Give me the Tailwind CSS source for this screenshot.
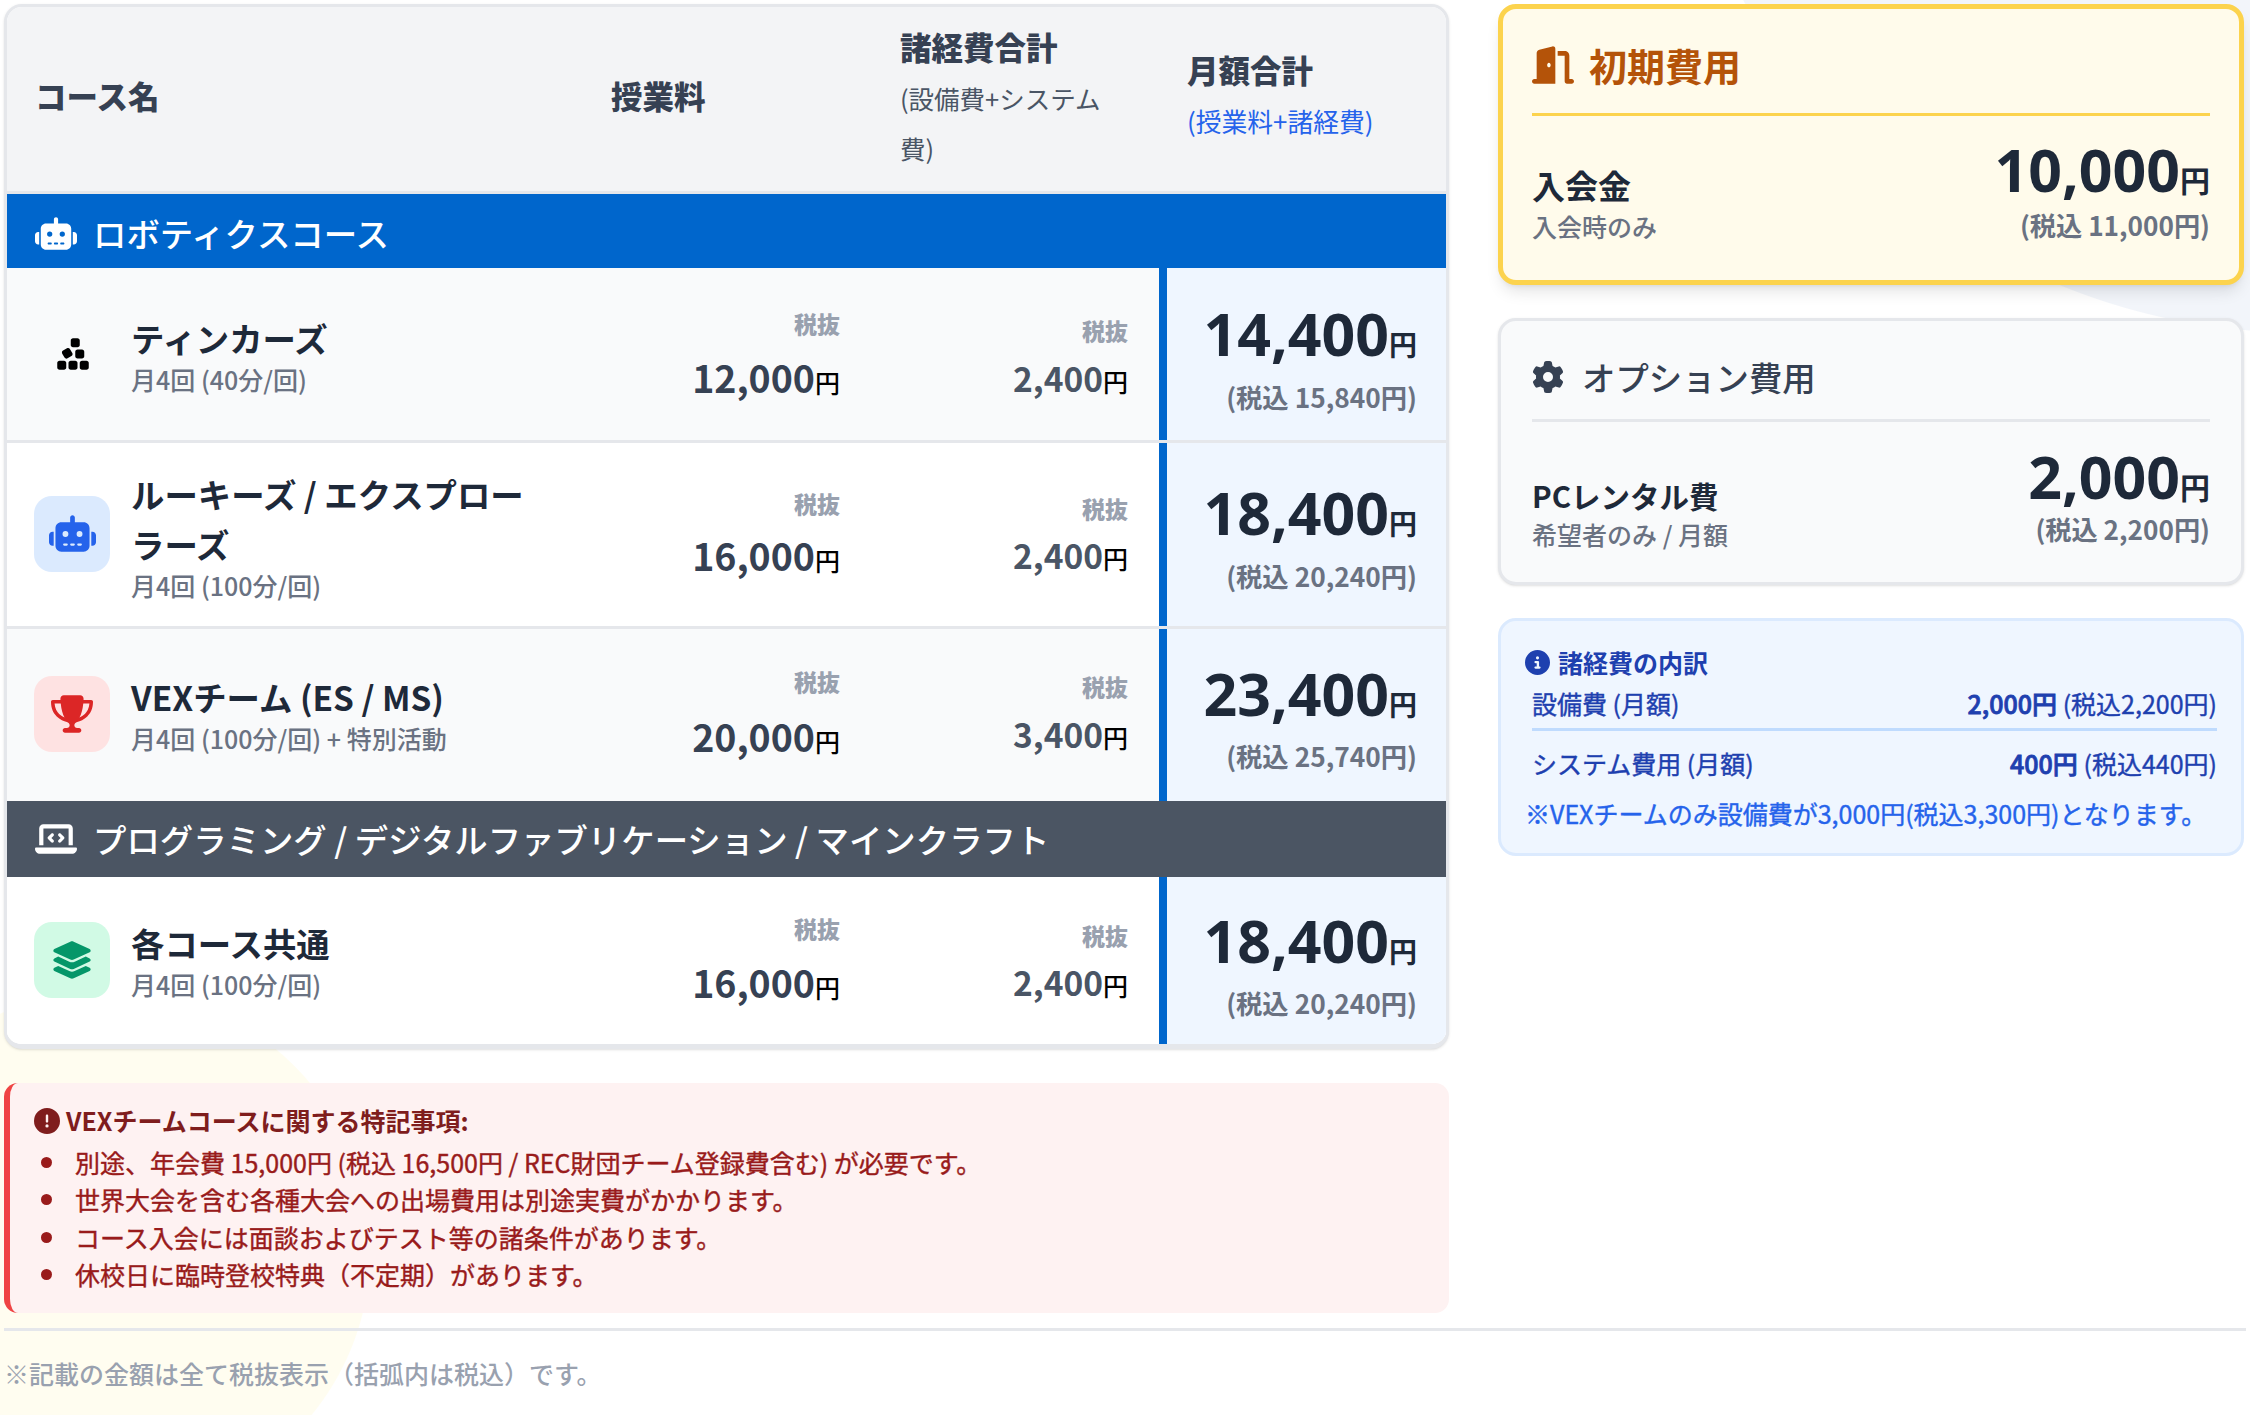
<!DOCTYPE html>
<html lang="ja">
<head>
<meta charset="utf-8">
<title>料金表</title>
<script src="https://cdn.jsdelivr.net/npm/@tailwindcss/browser@4"></script>
</head>
<body class="h-screen overflow-hidden bg-white bg-[radial-gradient(circle_at_110px_1250px,#fffdf0_260px,transparent_261px),radial-gradient(circle_at_2300px_-300px,#f2f5fa_632px,transparent_633px)] font-['Noto_Sans_CJK_JP','Noto_Sans',sans-serif] text-gray-800">

<div class="flex flex-col px-[4px] pt-[4px]">
  <div class="flex gap-[49px]">
    <!-- left column -->
    <div class="w-[1445px] shrink-0">
      <div class="overflow-hidden rounded-[18px] border-x-[3px] border-t-[3px] border-b-[5px] border-gray-200 bg-white shadow-sm">
        <div class="grid h-[187px] grid-cols-[574px_289px_289px_1fr] items-center border-b-[3px] border-gray-200 bg-gray-100 text-[31.5px] font-black text-gray-700">
          <div class="pb-[6px] pl-[28px]">コース名</div>
          <div class="pb-[6px] pl-[30px]">授業料</div>
          <div class="pb-[2px] pl-[30px] pr-[30px]">諸経費合計<div class="mt-[2px] text-[25.5px] font-normal leading-[50px] text-gray-600">(設備費+システム費)</div></div>
          <div class="pb-[7px] pl-[28px]">月額合計<div class="mt-[2px] text-[25.8px] font-normal leading-[49px] text-[#2563eb]">(授業料+諸経費)</div></div>
        </div>

        <div class="flex h-[74px] items-center gap-[16px] bg-[#0066cc] pl-[28px] pt-[5px] text-[33.4px] font-medium text-white">
          <svg class="h-[34px] w-[42px] fill-current" viewBox="0 0 640 512"><path d="M320 0c17.7 0 32 14.3 32 32V96H472c44.2 0 80 35.8 80 80V416c0 44.2-35.8 80-80 80H168c-44.2 0-80-35.8-80-80V176c0-44.2 35.8-80 80-80H288V32c0-17.7 14.3-32 32-32zM208 384c-8.8 0-16 7.2-16 16s7.2 16 16 16h32c8.8 0 16-7.2 16-16s-7.2-16-16-16H208zm96 0c-8.8 0-16 7.2-16 16s7.2 16 16 16h32c8.8 0 16-7.2 16-16s-7.2-16-16-16H304zm96 0c-8.8 0-16 7.2-16 16s7.2 16 16 16h32c8.8 0 16-7.2 16-16s-7.2-16-16-16H400zM264 256a40 40 0 1 0 -80 0 40 40 0 1 0 80 0zm152 40a40 40 0 1 0 0-80 40 40 0 1 0 0 80zM48 224H64V416H48c-26.5 0-48-21.5-48-48V272c0-26.5 21.5-48 48-48zm544 0c26.5 0 48 21.5 48 48v96c0 26.5-21.5 48-48 48H576V224h16z"/></svg>
          ロボティクスコース
        </div>

        <!-- ティンカーズ -->
        <div class="grid h-[175px] grid-cols-[574px_289px_289px_1fr] border-b-[3px] border-gray-200 bg-gray-50">
          <div class="flex items-center gap-[21px] pl-[27px]">
            <div class="flex h-[76px] w-[76px] items-center justify-center pl-[2px]">
              <svg class="h-[36px] w-[36px] fill-black" viewBox="0 0 448 512"><path d="M192 64v64c0 17.7 14.3 32 32 32h64c17.7 0 32-14.3 32-32V64c0-17.7-14.3-32-32-32H224c-17.7 0-32 14.3-32 32zM82.7 207c-15.3 8.8-20.5 28.4-11.7 43.7l32 55.4c8.8 15.3 28.4 20.5 43.7 11.7l55.4-32c15.3-8.8 20.5-28.4 11.7-43.7l-32-55.4c-8.8-15.3-28.4-20.5-43.7-11.7L82.7 207zM288 192c-17.7 0-32 14.3-32 32v64c0 17.7 14.3 32 32 32h64c17.7 0 32-14.3 32-32V224c0-17.7-14.3-32-32-32H288zm64 160c-17.7 0-32 14.3-32 32v64c0 17.7 14.3 32 32 32h64c17.7 0 32-14.3 32-32V384c0-17.7-14.3-32-32-32H352zM160 384v64c0 17.7 14.3 32 32 32h64c17.7 0 32-14.3 32-32V384c0-17.7-14.3-32-32-32H192c-17.7 0-32 14.3-32 32zM32 352c-17.7 0-32 14.3-32 32v64c0 17.7 14.3 32 32 32H96c17.7 0 32-14.3 32-32V384c0-17.7-14.3-32-32-32H32z"/></svg>
            </div>
            <div>
              <div class="text-[33.4px] font-bold leading-[50px]">ティンカーズ</div>
              <div class="text-[25px] font-medium leading-[32px] text-gray-500">月4回 (40分/回)</div>
            </div>
          </div>
          <div class="flex flex-col items-end justify-center pr-[30px] pt-[9px]">
            <div class="text-[23px] font-black leading-[36px] text-gray-400">税抜</div>
            <div class="mt-[6px] text-[37.5px] font-bold leading-[60px] text-gray-700">12,000<span class="text-[25px] font-medium text-black">円</span></div>
          </div>
          <div class="flex flex-col items-end justify-center pr-[31px] pt-[11px]">
            <div class="text-[23px] font-black leading-[36px] text-gray-400">税抜</div>
            <div class="mt-[4px] text-[33.5px] font-bold leading-[52px] text-gray-600">2,400<span class="text-[25px] font-medium text-black">円</span></div>
          </div>
          <div class="flex flex-col items-end justify-center border-l-[8px] border-[#0066cc] bg-blue-50 pr-[29px] pt-[9px]">
            <div class="font-['Noto_Sans',sans-serif] text-[59px] font-bold leading-[66px]">14,400<span class="font-['Noto_Sans_CJK_JP',sans-serif] text-[28px]">円</span></div>
            <div class="text-[26.3px] font-bold leading-[40px] text-gray-500">(税込 15,840円)</div>
          </div>
        </div>

        <!-- ルーキーズ -->
        <div class="grid h-[186px] grid-cols-[574px_289px_289px_1fr] border-b-[3px] border-gray-200 bg-white">
          <div class="flex items-center gap-[21px] pl-[27px]">
            <div class="mb-[2px] flex h-[76px] w-[76px] shrink-0 items-center justify-center rounded-[18px] bg-[#dbeafe]">
              <svg class="h-[38px] w-[47px] fill-[#2563eb]" viewBox="0 0 640 512"><path d="M320 0c17.7 0 32 14.3 32 32V96H472c44.2 0 80 35.8 80 80V416c0 44.2-35.8 80-80 80H168c-44.2 0-80-35.8-80-80V176c0-44.2 35.8-80 80-80H288V32c0-17.7 14.3-32 32-32zM208 384c-8.8 0-16 7.2-16 16s7.2 16 16 16h32c8.8 0 16-7.2 16-16s-7.2-16-16-16H208zm96 0c-8.8 0-16 7.2-16 16s7.2 16 16 16h32c8.8 0 16-7.2 16-16s-7.2-16-16-16H304zm96 0c-8.8 0-16 7.2-16 16s7.2 16 16 16h32c8.8 0 16-7.2 16-16s-7.2-16-16-16H400zM264 256a40 40 0 1 0 -80 0 40 40 0 1 0 80 0zm152 40a40 40 0 1 0 0-80 40 40 0 1 0 0 80zM48 224H64V416H48c-26.5 0-48-21.5-48-48V272c0-26.5 21.5-48 48-48zm544 0c26.5 0 48 21.5 48 48v96c0 26.5-21.5 48-48 48H576V224h16z"/></svg>
            </div>
            <div class="w-[420px]">
              <div class="text-[33.4px] font-bold leading-[50px]">ルーキーズ / エクスプローラーズ</div>
              <div class="text-[25px] font-medium leading-[32px] text-gray-500">月4回 (100分/回)</div>
            </div>
          </div>
          <div class="flex flex-col items-end justify-center pr-[30px] pt-[6px]">
            <div class="text-[23px] font-black leading-[36px] text-gray-400">税抜</div>
            <div class="mt-[4px] text-[37.5px] font-bold leading-[60px] text-gray-700">16,000<span class="text-[25px] font-medium text-black">円</span></div>
          </div>
          <div class="flex flex-col items-end justify-center pr-[31px] pt-[5px]">
            <div class="text-[23px] font-black leading-[36px] text-gray-400">税抜</div>
            <div class="mt-[3px] text-[33.5px] font-bold leading-[52px] text-gray-600">2,400<span class="text-[25px] font-medium text-black">円</span></div>
          </div>
          <div class="flex flex-col items-end justify-center border-l-[8px] border-[#0066cc] bg-blue-50 pr-[29px] pt-[5px]">
            <div class="font-['Noto_Sans',sans-serif] text-[59px] font-bold leading-[66px]">18,400<span class="font-['Noto_Sans_CJK_JP',sans-serif] text-[28px]">円</span></div>
            <div class="text-[26.3px] font-bold leading-[40px] text-gray-500">(税込 20,240円)</div>
          </div>
        </div>

        <!-- VEX -->
        <div class="grid h-[172px] grid-cols-[574px_289px_289px_1fr] bg-gray-50">
          <div class="flex items-center gap-[21px] pl-[27px]">
            <div class="mb-[2px] flex h-[76px] w-[76px] shrink-0 items-center justify-center rounded-[18px] bg-[#fee2e2]">
              <svg class="h-[38px] w-[42px] fill-[#dc2626]" viewBox="0 0 576 512"><path d="M400 0H176c-26.5 0-48.1 21.8-47.1 48.2c.2 5.3 .4 10.6 .7 15.8H24C10.7 64 0 74.7 0 88c0 92.6 33.5 157 78.5 200.7c44.3 43.1 98.3 64.8 138.1 75.8c23.4 6.5 39.4 26 39.4 45.6c0 20.9-17 37.9-37.9 37.9H192c-17.7 0-32 14.3-32 32s14.3 32 32 32H384c17.7 0 32-14.3 32-32s-14.3-32-32-32H357.9C337 448 320 431 320 410.1c0-19.6 15.9-39.2 39.4-45.6c39.9-11 93.9-32.7 138.2-75.8C542.5 245 576 180.6 576 88c0-13.3-10.7-24-24-24H446.4c.3-5.2 .5-10.4 .7-15.8C448.1 21.8 426.5 0 400 0zM48.9 112h84.4c9.1 90.1 29.2 150.3 51.9 190.6c-24.9-11-50.8-26.5-73.2-48.3c-32-31.1-58-76-63-142.3zM464.1 254.3c-22.4 21.8-48.3 37.3-73.2 48.3c22.7-40.3 42.8-100.5 51.9-190.6h84.4c-5.1 66.3-31.1 111.2-63 142.3z"/></svg>
            </div>
            <div class="pb-[4px]">
              <div class="text-[33.4px] font-bold leading-[50px]">VEXチーム (ES / MS)</div>
              <div class="text-[25px] font-medium leading-[32px] text-gray-500">月4回 (100分/回) + 特別活動</div>
            </div>
          </div>
          <div class="flex flex-col items-end justify-center pr-[30px] pt-[3px]">
            <div class="text-[23px] font-black leading-[36px] text-gray-400">税抜</div>
            <div class="mt-[7px] text-[37.5px] font-bold leading-[60px] text-gray-700">20,000<span class="text-[25px] font-medium text-black">円</span></div>
          </div>
          <div class="flex flex-col items-end justify-center pr-[31px]">
            <div class="text-[23px] font-black leading-[36px] text-gray-400">税抜</div>
            <div class="mt-[4px] text-[33.5px] font-bold leading-[52px] text-gray-600">3,400<span class="text-[25px] font-medium text-black">円</span></div>
          </div>
          <div class="flex flex-col items-end justify-center border-l-[8px] border-[#0066cc] bg-blue-50 pr-[29px] pt-[4px]">
            <div class="font-['Noto_Sans',sans-serif] text-[59px] font-bold leading-[66px]">23,400<span class="font-['Noto_Sans_CJK_JP',sans-serif] text-[28px]">円</span></div>
            <div class="text-[26.3px] font-bold leading-[38px] text-gray-500">(税込 25,740円)</div>
          </div>
        </div>

        <div class="flex h-[76px] items-center gap-[16px] bg-[#4b5563] pl-[28px] text-[33.4px] font-medium text-white">
          <svg class="h-[34px] w-[42px] fill-current" viewBox="0 0 640 512"><path d="M64 96c0-35.3 28.7-64 64-64H512c35.3 0 64 28.7 64 64V352H512V96H128V352H64V96zM0 403.2C0 392.6 8.6 384 19.2 384H620.8c10.6 0 19.2 8.6 19.2 19.2c0 42.4-34.4 76.8-76.8 76.8H76.8C34.4 480 0 445.6 0 403.2zM281 209l-31 31 31 31c9.4 9.4 9.4 24.6 0 33.9s-24.6 9.4-33.9 0l-48-48c-9.4-9.4-9.4-24.6 0-33.9l48-48c9.4-9.4 24.6-9.4 33.9 0s9.4 24.6 0 33.9zM393 175l48 48c9.4 9.4 9.4 24.6 0 33.9l-48 48c-9.4 9.4-24.6 9.4-33.9 0s-9.4-24.6 0-33.9l31-31-31-31c-9.4-9.4-9.4-24.6 0-33.9s24.6-9.4 33.9 0z"/></svg>
          プログラミング / デジタルファブリケーション / マインクラフト
        </div>

        <!-- 各コース共通 -->
        <div class="grid h-[167px] grid-cols-[574px_289px_289px_1fr] bg-white">
          <div class="flex items-center gap-[21px] pl-[27px]">
            <div class="mb-[2px] flex h-[76px] w-[76px] shrink-0 items-center justify-center rounded-[18px] bg-[#d1fae5]">
              <svg class="h-[38px] w-[42px] fill-[#059669]" viewBox="0 0 576 512"><path d="M264.5 5.2c14.9-6.9 32.1-6.9 47 0l218.6 101c8.5 3.9 13.9 12.4 13.9 21.8s-5.4 17.9-13.9 21.8l-218.6 101c-14.9 6.9-32.1 6.9-47 0L45.9 149.8C37.4 145.8 32 137.3 32 128s5.4-17.9 13.9-21.8L264.5 5.2zM476.9 209.6l53.2 24.6c8.5 3.9 13.9 12.4 13.9 21.8s-5.4 17.9-13.9 21.8l-218.6 101c-14.9 6.9-32.1 6.9-47 0L45.9 277.8C37.4 273.8 32 265.3 32 256s5.4-17.9 13.9-21.8l53.2-24.6 152 70.2c23.4 10.8 50.4 10.8 73.8 0l152-70.2zm-152 198.2l152-70.2 53.2 24.6c8.5 3.9 13.9 12.4 13.9 21.8s-5.4 17.9-13.9 21.8l-218.6 101c-14.9 6.9-32.1 6.9-47 0L45.9 405.8C37.4 401.8 32 393.3 32 384s5.4-17.9 13.9-21.8l53.2-24.6 152 70.2c23.4 10.8 50.4 10.8 73.8 0z"/></svg>
            </div>
            <div class="pb-[3px]">
              <div class="text-[33.4px] font-bold leading-[50px]">各コース共通</div>
              <div class="text-[25px] font-medium leading-[32px] text-gray-500">月4回 (100分/回)</div>
            </div>
          </div>
          <div class="flex flex-col items-end justify-center pr-[30px] pt-[6px]">
            <div class="text-[23px] font-black leading-[36px] text-gray-400">税抜</div>
            <div class="mt-[6px] text-[37.5px] font-bold leading-[60px] text-gray-700">16,000<span class="text-[25px] font-medium text-black">円</span></div>
          </div>
          <div class="flex flex-col items-end justify-center pr-[31px] pt-[6px]">
            <div class="text-[23px] font-black leading-[36px] text-gray-400">税抜</div>
            <div class="mt-[3px] text-[33.5px] font-bold leading-[52px] text-gray-600">2,400<span class="text-[25px] font-medium text-black">円</span></div>
          </div>
          <div class="flex flex-col items-end justify-center border-l-[8px] border-[#0066cc] bg-blue-50 pr-[29px] pt-[7px]">
            <div class="font-['Noto_Sans',sans-serif] text-[59px] font-bold leading-[66px]">18,400<span class="font-['Noto_Sans_CJK_JP',sans-serif] text-[28px]">円</span></div>
            <div class="text-[26.3px] font-bold leading-[38px] text-gray-500">(税込 20,240円)</div>
          </div>
        </div>
      </div>

      <!-- 特記事項 -->
      <div class="mt-[34px] h-[230px] rounded-[14px] border-l-[6px] border-[#ef4444] bg-[#fef2f2] pl-[24px] pt-[19px] text-[25px] text-[#991b1b]">
        <div class="flex items-center gap-[6px] font-bold text-[#7f1d1d]">
          <svg class="h-[26px] w-[26px] fill-current" viewBox="0 0 512 512"><path d="M256 512A256 256 0 1 0 256 0a256 256 0 1 0 0 512zm0-384c13.3 0 24 10.7 24 24V264c0 13.3-10.7 24-24 24s-24-10.7-24-24V152c0-13.3 10.7-24 24-24zM224 352a32 32 0 1 1 64 0 32 32 0 1 1 -64 0z"/></svg>
          VEXチームコースに関する特記事項:
        </div>
        <ul class="ml-[7px] mt-[4px] font-normal leading-[37.5px] [-webkit-text-stroke:0.4px_currentColor]">
          <li class="flex items-center gap-[23px]"><span class="h-[11px] w-[11px] rounded-full bg-[#991b1b]"></span>別途、年会費 15,000円 (税込 16,500円 / REC財団チーム登録費含む) が必要です。</li>
          <li class="flex items-center gap-[23px]"><span class="h-[11px] w-[11px] rounded-full bg-[#991b1b]"></span>世界大会を含む各種大会への出場費用は別途実費がかかります。</li>
          <li class="flex items-center gap-[23px]"><span class="h-[11px] w-[11px] rounded-full bg-[#991b1b]"></span>コース入会には面談およびテスト等の諸条件があります。</li>
          <li class="flex items-center gap-[23px]"><span class="h-[11px] w-[11px] rounded-full bg-[#991b1b]"></span>休校日に臨時登校特典（不定期）があります。</li>
        </ul>
      </div>
    </div>

    <!-- right column -->
    <div class="flex w-[746px] shrink-0 flex-col gap-[33px]">
      <div class="h-[281px] rounded-[18px] border-[5px] border-[#fcd34d] bg-[#fffbeb] px-[29px] pt-[32px] shadow-lg">
        <div class="flex items-center gap-[15px] border-b-[3px] border-[#fcd34d] pb-[24px] text-[38px] font-bold leading-[48px] text-[#b45309]">
          <svg class="h-[38px] w-[42px] fill-current" viewBox="0 0 576 512"><path d="M320 32c0-9.9-4.5-19.2-12.3-25.2S289.8-1.4 280.2 1l-179.9 45C79 51.3 64 70.5 64 92.5V448H32c-17.7 0-32 14.3-32 32s14.3 32 32 32H96 288h32V480 32zM256 256c0 17.7-10.7 32-24 32s-24-14.3-24-32s10.7-32 24-32s24 14.3 24 32zm96-128h96V480c0 17.7 14.3 32 32 32h64c17.7 0 32-14.3 32-32s-14.3-32-32-32H512V128c0-35.3-28.7-64-64-64H352v64z"/></svg>
          初期費用
        </div>
        <div class="mt-[21px] flex items-start justify-between">
          <div class="pt-[24px]">
            <div class="text-[33px] font-bold leading-[48px]">入会金</div>
            <div class="text-[25px] font-medium leading-[34px] text-gray-500">入会時のみ</div>
          </div>
          <div class="pt-[2px] text-right">
            <div class="font-['Noto_Sans',sans-serif] text-[59px] font-bold leading-[60px]">10,000<span class="font-['Noto_Sans_CJK_JP',sans-serif] text-[30px]">円</span></div>
            <div class="text-[26.2px] font-bold leading-[32px] text-gray-500">(税込 11,000円)</div>
          </div>
        </div>
      </div>

      <div class="h-[267px] rounded-[18px] border-[3px] border-gray-200 bg-gray-50 px-[31px] pt-[32px] shadow-sm">
        <div class="flex items-center gap-[18px] border-b-[3px] border-gray-200 pb-[18px] text-[33.4px] font-medium leading-[48px] text-gray-700">
          <svg class="h-[32px] w-[32px] fill-current" viewBox="0 0 512 512"><path d="M495.9 166.6c3.2 8.7 .5 18.4-6.4 24.6l-43.3 39.4c1.1 8.3 1.7 16.8 1.7 25.4s-.6 17.1-1.7 25.4l43.3 39.4c6.9 6.2 9.6 15.9 6.4 24.6c-4.4 11.9-9.7 23.3-15.8 34.3l-4.7 8.1c-6.6 11-14 21.4-22.1 31.2c-5.9 7.2-15.7 9.6-24.5 6.8l-55.7-17.7c-13.4 10.3-28.2 18.9-44 25.4l-12.5 57.1c-2 9.1-9 16.3-18.2 17.8c-13.8 2.3-28 3.5-42.5 3.5s-28.7-1.2-42.5-3.5c-9.2-1.5-16.2-8.7-18.2-17.8l-12.5-57.1c-15.8-6.5-30.6-15.1-44-25.4L83.1 425.9c-8.8 2.8-18.6 .3-24.5-6.8c-8.1-9.8-15.5-20.2-22.1-31.2l-4.7-8.1c-6.1-11-11.4-22.4-15.8-34.3c-3.2-8.7-.5-18.4 6.4-24.6l43.3-39.4C64.6 273.1 64 264.6 64 256s.6-17.1 1.7-25.4L22.4 191.2c-6.9-6.2-9.6-15.9-6.4-24.6c4.4-11.9 9.7-23.3 15.8-34.3l4.7-8.1c6.6-11 14-21.4 22.1-31.2c5.9-7.2 15.7-9.6 24.5-6.8l55.7 17.7c13.4-10.3 28.2-18.9 44-25.4l12.5-57.1c2-9.1 9-16.3 18.2-17.8C227.3 1.2 241.5 0 256 0s28.7 1.2 42.5 3.5c9.2 1.5 16.2 8.7 18.2 17.8l12.5 57.1c15.8 6.5 30.6 15.1 44 25.4l55.7-17.7c8.8-2.8 18.6-.3 24.5 6.8c8.1 9.8 15.5 20.2 22.1 31.2l4.7 8.1c6.1 11 11.4 22.4 15.8 34.3zM256 336a80 80 0 1 0 0-160 80 80 0 1 0 0 160z"/></svg>
          オプション費用
        </div>
        <div class="mt-[20px] flex items-start justify-between">
          <div class="pt-[30px]">
            <div class="text-[29.5px] font-bold leading-[46px]">PCレンタル費</div>
            <div class="text-[25px] font-medium leading-[32px] text-gray-500">希望者のみ / 月額</div>
          </div>
          <div class="pt-[6px] text-right">
            <div class="font-['Noto_Sans',sans-serif] text-[59px] font-bold leading-[56px]">2,000<span class="font-['Noto_Sans_CJK_JP',sans-serif] text-[30px]">円</span></div>
            <div class="text-[26.2px] font-bold leading-[30px] text-gray-500">(税込 2,200円)</div>
          </div>
        </div>
      </div>

      <div class="h-[238px] rounded-[18px] border-[3px] border-[#dbeafe] bg-[#eff6ff] px-[24px] pt-[23px] text-[25px] text-[#1e40af]">
        <div class="flex items-center gap-[8px] font-bold leading-[36px]">
          <svg class="h-[25px] w-[25px] fill-current" viewBox="0 0 512 512"><path d="M256 512A256 256 0 1 0 256 0a256 256 0 1 0 0 512zM216 336h24V272H216c-13.3 0-24-10.7-24-24s10.7-24 24-24h48c13.3 0 24 10.7 24 24v88h8c13.3 0 24 10.7 24 24s-10.7 24-24 24H216c-13.3 0-24-10.7-24-24s10.7-24 24-24zm40-208a32 32 0 1 1 0 64 32 32 0 1 1 0-64z"/></svg>
          諸経費の内訳
        </div>
        <div class="ml-[7px] mt-[5px] flex items-center justify-between border-b-[3px] border-[#bfdbfe] pb-[7px] font-normal leading-[36px] [-webkit-text-stroke:0.4px_currentColor]"><span>設備費 (月額)</span><span><span class="font-medium [-webkit-text-stroke:0.8px_currentColor]">2,000円</span> (税込2,200円)</span></div>
        <div class="ml-[7px] mt-[14px] flex items-center justify-between font-normal leading-[36px] [-webkit-text-stroke:0.4px_currentColor]"><span>システム費用 (月額)</span><span><span class="font-medium [-webkit-text-stroke:0.8px_currentColor]">400円</span> (税込440円)</span></div>
        <div class="mt-[14px] font-normal leading-[36px] text-[#2563eb] [-webkit-text-stroke:0.4px_currentColor]">※VEXチームのみ設備費が3,000円(税込3,300円)となります。</div>
      </div>
    </div>
  </div>

  <!-- footer -->
  <div class="mt-[15px] border-t-[3px] border-gray-200 pt-[24px] text-[25px] font-medium leading-[36px] text-gray-400">※記載の金額は全て税抜表示（括弧内は税込）です。</div>
</div>
</body>
</html>
